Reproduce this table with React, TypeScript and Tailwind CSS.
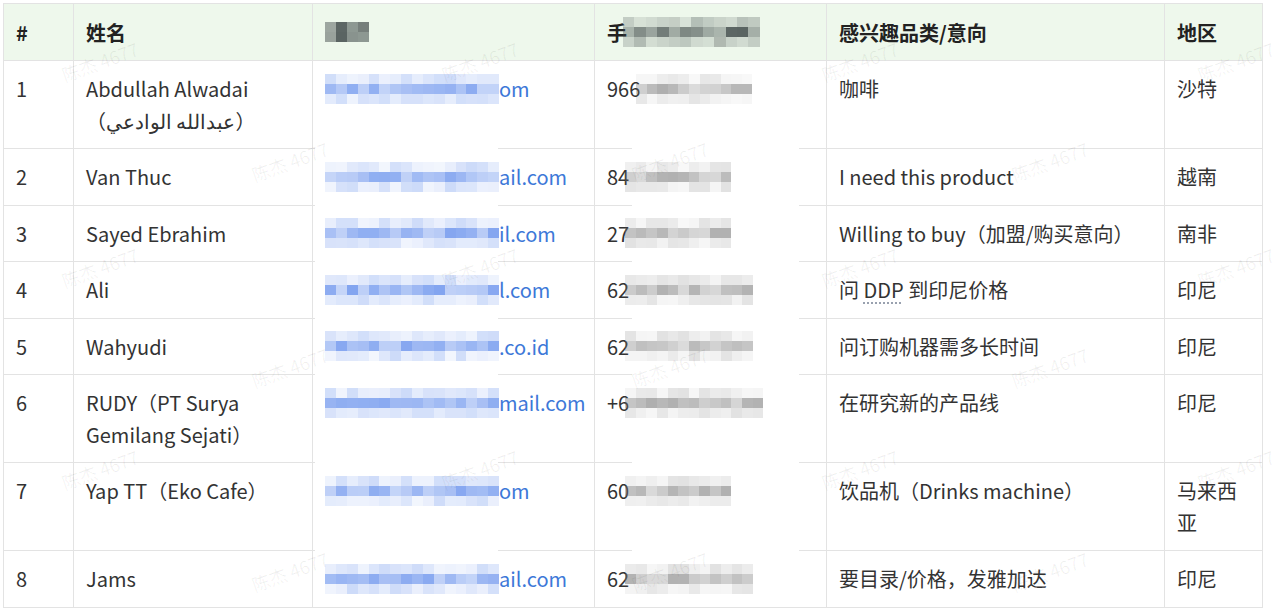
import type { FC } from "react";

type Lead = {
  id: number;
  name: string;
  mailTail: string;
  phoneHead: string;
  phoneBlur: number; // mosaic width in px
  interest: React.ReactNode;
  region: string;
};

const leads: Lead[] = [
  { id: 1, name: "Abdullah Alwadai（عبدالله الوادعي）", mailTail: "om", phoneHead: "966", phoneBlur: 116, interest: "咖啡", region: "沙特" },
  { id: 2, name: "Van Thuc", mailTail: "ail.com", phoneHead: "84", phoneBlur: 106, interest: "I need this product", region: "越南" },
  { id: 3, name: "Sayed Ebrahim", mailTail: "il.com", phoneHead: "27", phoneBlur: 106, interest: "Willing to buy（加盟/购买意向）", region: "南非" },
  {
    id: 4,
    name: "Ali",
    mailTail: "l.com",
    phoneHead: "62",
    phoneBlur: 128,
    interest: (
      <>
        问 <span className="underline decoration-dotted decoration-gray-400 underline-offset-4">DDP</span> 到印尼价格
      </>
    ),
    region: "印尼",
  },
  { id: 5, name: "Wahyudi", mailTail: ".co.id", phoneHead: "62", phoneBlur: 128, interest: "问订购机器需多长时间", region: "印尼" },
  { id: 6, name: "RUDY（PT Surya Gemilang Sejati）", mailTail: "mail.com", phoneHead: "+6", phoneBlur: 138, interest: "在研究新的产品线", region: "印尼" },
  { id: 7, name: "Yap TT（Eko Cafe）", mailTail: "om", phoneHead: "60", phoneBlur: 106, interest: "饮品机（Drinks machine）", region: "马来西亚" },
  { id: 8, name: "Jams", mailTail: "ail.com", phoneHead: "62", phoneBlur: 128, interest: "要目录/价格，发雅加达", region: "印尼" },
];

// small deterministic random so the mosaic stays the same between renders
const rand = (seed: number) => {
  let s = seed * 9301 + 49297;
  return () => {
    s = (s * 9301 + 49297) % 233280;
    return s / 233280;
  };
};

type MosaicProps = { seed: number; width: number; tone: "blue" | "gray" | "dark"; rows?: number; cell?: number };

const Mosaic: FC<MosaicProps> = ({ seed, width, tone, rows = 3, cell = 11 }) => {
  const r = rand(seed);
  const cols = Math.round(width / cell);
  const shade = (row: number) => {
    const strong = rows === 3 ? row === 1 : true;
    const v = r();
    if (tone === "blue") {
      const a = strong ? 0.35 + v * 0.4 : 0.08 + v * 0.22;
      return `rgba(90,135,235,${a.toFixed(2)})`;
    }
    if (tone === "gray") {
      const a = strong ? 0.25 + v * 0.3 : 0.05 + v * 0.15;
      return `rgba(110,110,110,${a.toFixed(2)})`;
    }
    const a = strong ? 0.35 + v * 0.5 : 0.1 + v * 0.25;
    return `rgba(60,70,70,${a.toFixed(2)})`;
  };
  return (
    <span className="inline-flex h-[31px] flex-col justify-center align-top" style={{ width }}>
      {Array.from({ length: rows }).map((_, row) => (
        <span key={row} className="flex">
          {Array.from({ length: cols }).map((_, c) => (
            <span key={c} style={{ width: width / cols, height: 10, background: shade(row) }} />
          ))}
        </span>
      ))}
    </span>
  );
};

const marks = [
  [100, 62], [480, 62], [860, 62], [1236, 62],
  [290, 162], [670, 162], [1050, 162],
  [100, 268], [480, 268], [860, 268], [1236, 268],
  [290, 368], [670, 368], [1050, 368],
  [100, 470], [480, 470], [860, 470], [1236, 470],
  [290, 572], [670, 572], [1050, 572],
];

const td = "border border-[#e3e3e3] px-3 py-3 align-top";

export default function App() {
  return (
    <div
      className="relative min-h-[609px] w-[1279px] overflow-hidden bg-white p-[3px] text-[20px] leading-[31.5px] text-[#333]"
      style={{ fontFamily: '"Noto Sans CJK SC", "Noto Sans", sans-serif' }}
    >
      <table className="w-[1259px] table-fixed border-collapse">
        <colgroup>
          <col className="w-[70px]" />
          <col className="w-[239px]" />
          <col className="w-[282px]" />
          <col className="w-[232px]" />
          <col className="w-[338px]" />
          <col className="w-[98px]" />
        </colgroup>
        <thead>
          <tr className="bg-[#eef8ec] text-left font-bold text-[#222] leading-[31px]">
            <th className={`${td} py-[12.5px]`}>#</th>
            <th className={`${td} py-[12.5px]`}>姓名</th>
            <th className={`${td} py-[12.5px]`}>
              <Mosaic seed={3} width={44} tone="dark" rows={2} />
            </th>
            <th className={`${td} whitespace-nowrap py-[12.5px]`}>
              手<span className="relative z-20 -ml-1 inline-block align-top">
                <Mosaic seed={7} width={137} tone="dark" />
              </span>
            </th>
            <th className={`${td} py-[12.5px]`}>感兴趣品类/意向</th>
            <th className={`${td} py-[12.5px]`}>地区</th>
          </tr>
        </thead>
        <tbody>
          {leads.map((l) => (
            <tr key={l.id}>
              <td className={td}>{l.id}</td>
              <td className={td}>{l.name}</td>
              <td className={`${td} whitespace-nowrap text-[#3d78d8]`}>
                <span className="relative z-20 inline-block align-top">
                  <Mosaic seed={l.id * 11} width={174} tone="blue" />
                </span>
                <span className="relative z-20">{l.mailTail}</span>
              </td>
              <td className={`${td} whitespace-nowrap`}>
                <span className="relative z-20">{l.phoneHead}</span>
                <span className="relative z-20 -ml-1 inline-block align-top">
                  <Mosaic seed={l.id * 17 + 5} width={l.phoneBlur} tone="gray" />
                </span>
              </td>
              <td className={td}>{l.interest}</td>
              <td className={td}>{l.region}</td>
            </tr>
          ))}
        </tbody>
      </table>

      {/* blurred-out columns cover the grid lines */}
      <div className="absolute left-[315px] top-[61px] z-10 h-[545px] w-[183px] bg-white" />
      <div className="absolute left-[632px] top-[61px] z-10 h-[545px] w-[167px] bg-white" />

      {/* watermark */}
      <div className="pointer-events-none absolute inset-0 z-30">
        {marks.map(([x, y], i) => (
          <span
            key={i}
            className="absolute -translate-x-1/2 -translate-y-1/2 -rotate-[20deg] whitespace-nowrap text-[18px] text-black/[0.06]"
            style={{ left: x, top: y }}
          >
            陈杰 4677
          </span>
        ))}
      </div>
    </div>
  );
}
